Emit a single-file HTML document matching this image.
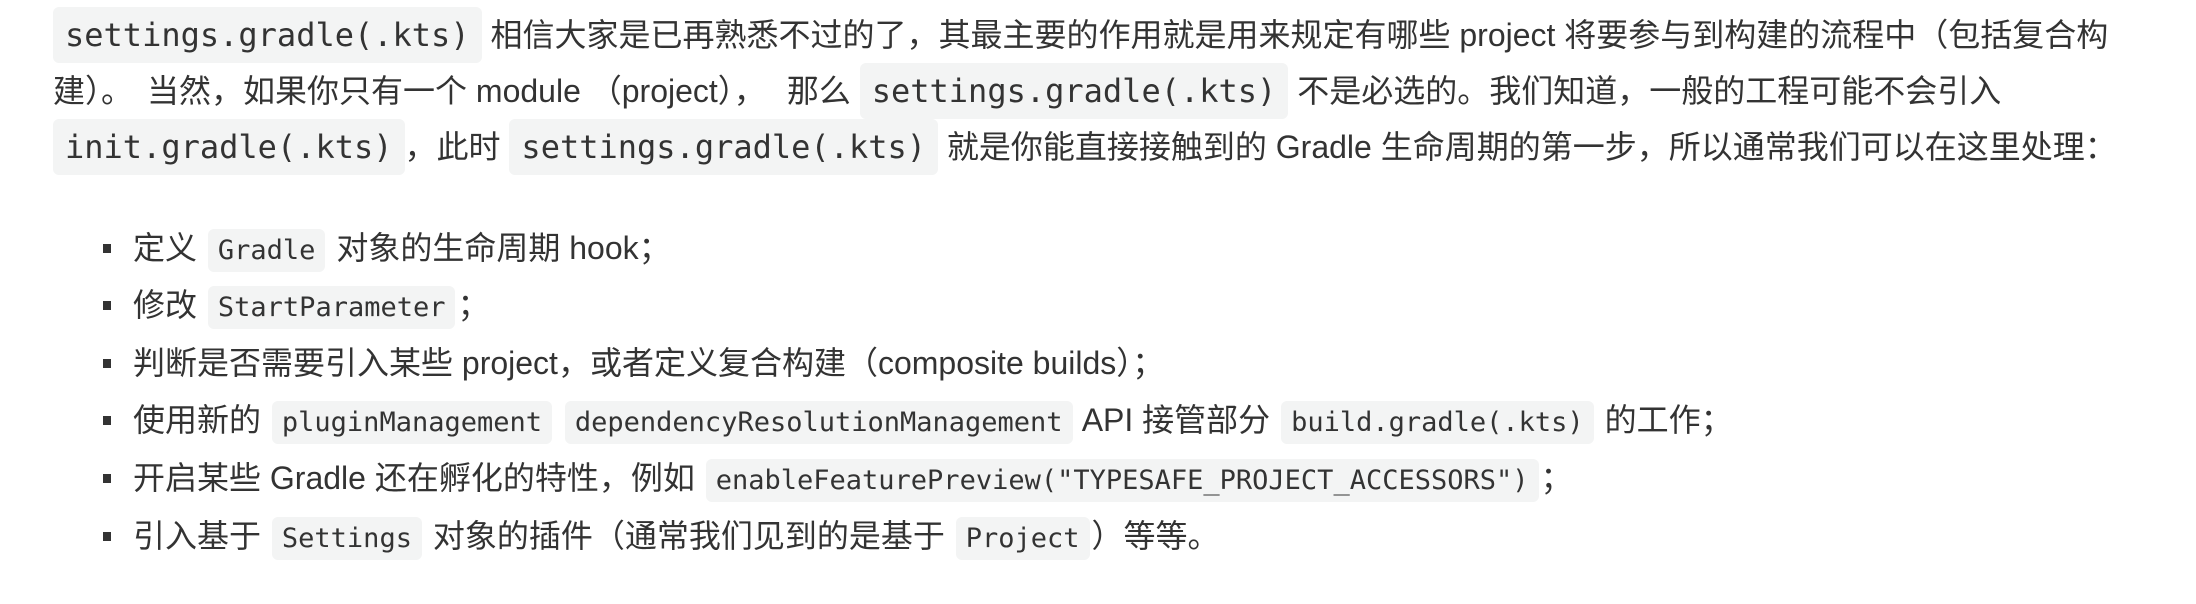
<!DOCTYPE html>
<html><head><meta charset="utf-8"><style>
html,body{margin:0;padding:0;background:#fff;width:2196px;height:604px;overflow:hidden}
body{font-family:"Liberation Sans","Noto Sans CJK SC",sans-serif;color:#333;font-size:32px}
.l{position:absolute;left:53px;white-space:nowrap;height:56px;line-height:56px}
code{font-family:"DejaVu Sans Mono","Liberation Mono",monospace;background:#f3f4f4;border-radius:6px}
.pc{font-size:32px;padding:9px 12px 9px 12px}
.li{position:absolute;left:133px;white-space:nowrap;line-height:58px}
.li code{font-size:27px;padding:6px 10px;margin:0 2px}
.b{position:absolute;left:103px;width:8px;height:9px;background:#333}
.s{display:inline-block}
</style></head><body>
<div class="l" style="top:7px"><code class="pc">settings.gradle(.kts)</code> 相信大家是已再熟悉不过的了，其最主要的作用就是用来规定有哪些 project 将要参与到构建的流程中（包括复合构</div>
<div class="l" style="top:63px">建）。<span class="s" style="width:14px"></span>当然，如果你只有一个 module （project），<span class="s" style="width:21px"></span>那么 <code class="pc">settings.gradle(.kts)</code> 不是必选的。我们知道，一般的工程可能不会引入</div>
<div class="l" style="top:119px"><code class="pc">init.gradle(.kts)</code>，此时 <code class="pc">settings.gradle(.kts)</code> 就是你能直接接触到的 Gradle 生命周期的第一步，所以通常我们可以在这里处理：</div>

<div class="b" style="top:244px"></div><div class="li" style="top:219px">定义 <code>Gradle</code> 对象的生命周期 hook；</div>
<div class="b" style="top:301px"></div><div class="li" style="top:276px">修改 <code>StartParameter</code>；</div>
<div class="b" style="top:359px"></div><div class="li" style="top:334px">判断是否需要引入某些 project，或者定义复合构建（composite builds）；</div>
<div class="b" style="top:416px"></div><div class="li" style="top:391px">使用新的 <code>pluginManagement</code> <code>dependencyResolutionManagement</code> API 接管部分 <code>build.gradle(.kts)</code> 的工作；</div>
<div class="b" style="top:474px"></div><div class="li" style="top:449px">开启某些 Gradle 还在孵化的特性，例如 <code>enableFeaturePreview("TYPESAFE_PROJECT_ACCESSORS")</code>；</div>
<div class="b" style="top:532px"></div><div class="li" style="top:507px">引入基于 <code>Settings</code> 对象的插件（通常我们见到的是基于 <code>Project</code>）等等。</div>
</body></html>
